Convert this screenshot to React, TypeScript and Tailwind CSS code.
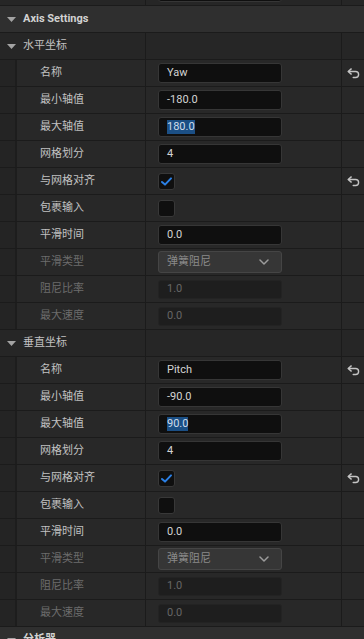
import React from "react";

const FONT = { fontFamily: 'Roboto, "Noto Sans CJK SC", sans-serif' };

function Tri() {
  return (
    <svg width="9" height="5" viewBox="0 0 9 5" className="shrink-0">
      <path d="M0 0 L9 0 L4.5 5 Z" fill="#a3a3a3" />
    </svg>
  );
}

function ResetIcon() {
  return (
    <svg width="13" height="11" viewBox="0 0 13 11" fill="none">
      <path d="M4.2 0.9 L1.2 3.5 L4.2 6.1" stroke="#c4c4c4" strokeWidth="1.4" strokeLinejoin="round" strokeLinecap="round" />
      <path d="M1.6 3.5 H8.6 A3 3 0 0 1 8.6 9.5 H6.2" stroke="#c4c4c4" strokeWidth="1.4" strokeLinecap="round" />
    </svg>
  );
}

type Kind =
  | { t: "text"; v: string; sel?: boolean }
  | { t: "check"; on: boolean }
  | { t: "combo"; v: string }
  | { t: "dis"; v: string };

function Value({ k }: { k: Kind }) {
  if (k.t === "text") {
    return (
      <div className="w-[124px] h-[20px] rounded-[3px] bg-[#0f0f0f] border border-[#363636] flex items-center pl-[8px] text-[11px] text-[#d4d4d4]">
        {k.sel ? (
          <span className="bg-[#1b4f85] text-[#cfdcea] leading-[14px]">{k.v}</span>
        ) : (
          <span>{k.v}</span>
        )}
      </div>
    );
  }
  if (k.t === "check") {
    return (
      <div className="w-[17px] h-[17px] rounded-[3px] bg-[#0f0f0f] border border-[#383838] flex items-center justify-center">
        {k.on && (
          <svg width="13" height="11" viewBox="0 0 13 11" fill="none">
            <path d="M2 6 L5 8.6 L11 2.4" stroke="#2b80e6" strokeWidth="2" strokeLinecap="round" strokeLinejoin="round" />
          </svg>
        )}
      </div>
    );
  }
  if (k.t === "combo") {
    return (
      <div className="w-[124px] h-[22px] rounded-[3px] bg-[#363636] border border-[#454545] flex items-center justify-between pl-[8px] pr-[12px] text-[11px] text-[#8a8a8a]">
        <span>{k.v}</span>
        <svg width="10" height="6" viewBox="0 0 10 6" fill="none">
          <path d="M1 1 L5 5 L9 1" stroke="#9c9c9c" strokeWidth="1.5" strokeLinecap="round" strokeLinejoin="round" />
        </svg>
      </div>
    );
  }
  return (
    <div className="w-[124px] h-[19px] rounded-[3px] bg-[#1e1e1e] border border-[#232323] flex items-center pl-[8px] text-[11px] text-[#666666]">
      {k.v}
    </div>
  );
}

function ChildRow({ label, k, reset, dim }: { label: string; k: Kind; reset?: boolean; dim?: boolean }) {
  return (
    <div className="h-[27px] border-t border-[#1b1b1b] flex">
      <div className="w-[15px] bg-[#242424]" />
      <div className="w-[2px] bg-[#1d1d1d]" />
      <div className={`w-[128px] flex items-center pl-[23px] text-[11px] bg-[#282828] ${dim ? "text-[#6c6c6c]" : "text-[#c2c2c2]"}`}>
        {label}
      </div>
      <div className="w-px bg-[#1b1b1b]" />
      <div className="w-[195px] flex items-center pl-[12px] bg-[#282828]">
        <Value k={k} />
      </div>
      <div className="w-px bg-[#1b1b1b]" />
      <div className="flex-1 flex items-center justify-center bg-[#282828]">{reset && <ResetIcon />}</div>
    </div>
  );
}

function GroupRow({ label }: { label: string }) {
  return (
    <div className="h-[27px] border-t border-[#1b1b1b] flex bg-[#262626]">
      <div className="w-[145px] flex items-center pl-[7px] gap-[7px] text-[11px] text-[#c2c2c2]">
        <Tri />
        <span>{label}</span>
      </div>
      <div className="w-px bg-[#1b1b1b]" />
      <div className="w-[195px]" />
      <div className="w-px bg-[#1b1b1b]" />
      <div className="flex-1" />
    </div>
  );
}

function CategoryRow({ label }: { label: string }) {
  return (
    <div className="h-[27px] border-t border-[#1b1b1b] flex items-center bg-[#2f2f2f] pl-[7px] gap-[7px] text-[11px] font-bold text-[#d2d2d2]">
      <Tri />
      <span>{label}</span>
    </div>
  );
}

function Axis({ title, name, min, max }: { title: string; name: string; min: string; max: string }) {
  return (
    <>
      <GroupRow label={title} />
      <ChildRow label="名称" k={{ t: "text", v: name }} reset />
      <ChildRow label="最小轴值" k={{ t: "text", v: min }} />
      <ChildRow label="最大轴值" k={{ t: "text", v: max, sel: true }} />
      <ChildRow label="网格划分" k={{ t: "text", v: "4" }} />
      <ChildRow label="与网格对齐" k={{ t: "check", on: true }} reset />
      <ChildRow label="包裹输入" k={{ t: "check", on: false }} />
      <ChildRow label="平滑时间" k={{ t: "text", v: "0.0" }} />
      <ChildRow label="平滑类型" k={{ t: "combo", v: "弹簧阻尼" }} dim />
      <ChildRow label="阻尼比率" k={{ t: "dis", v: "1.0" }} dim />
      <ChildRow label="最大速度" k={{ t: "dis", v: "0.0" }} dim />
    </>
  );
}

export default function App() {
  return (
    <div className="w-[364px] h-[639px] overflow-hidden bg-[#262626]" style={FONT}>
      <div className="h-[5px] flex bg-[#262626] overflow-hidden">
        <div className="w-[145px]" />
        <div className="w-px bg-[#1b1b1b]" />
        <div className="w-[195px] pl-[12px] relative">
          <div className="absolute left-[12px] bottom-[3px] w-[124px] h-[20px] rounded-[3px] bg-[#0f0f0f] border border-[#363636]" />
        </div>
        <div className="w-px bg-[#1b1b1b]" />
        <div className="flex-1" />
      </div>
      <CategoryRow label="Axis Settings" />
      <Axis title="水平坐标" name="Yaw" min="-180.0" max="180.0" />
      <Axis title="垂直坐标" name="Pitch" min="-90.0" max="90.0" />
      <CategoryRow label="分析器" />
    </div>
  );
}
